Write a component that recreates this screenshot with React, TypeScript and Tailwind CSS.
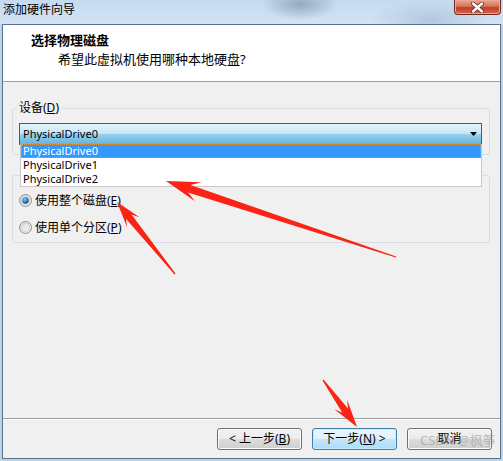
import React from 'react';

const ui = "font-['Noto_Sans','Noto_Sans_CJK_SC',sans-serif]";

function arrowPoints(
  tip: [number, number],
  tail: [number, number],
  head: number,
  wing: number,
  shaft: number
) {
  const [tx, ty] = tip;
  const [ax, ay] = tail;
  const dx = tx - ax;
  const dy = ty - ay;
  const len = Math.hypot(dx, dy);
  const ux = dx / len;
  const uy = dy / len;
  const nx = -uy;
  const ny = ux;
  const bx = tx - ux * head;
  const by = ty - uy * head;
  const sx = tx - ux * head * 0.72;
  const sy = ty - uy * head * 0.72;
  const pts = [
    [tx, ty],
    [bx + nx * wing, by + ny * wing],
    [sx + nx * shaft, sy + ny * shaft],
    [ax + nx * 0.6, ay + ny * 0.6],
    [ax - nx * 0.6, ay - ny * 0.6],
    [sx - nx * shaft, sy - ny * shaft],
    [bx - nx * wing, by - ny * wing],
  ];
  return pts.map((p) => p.map((v) => v.toFixed(1)).join(',')).join(' ');
}

function Radio({ checked }: { checked?: boolean }) {
  return (
    <svg width="13" height="13" viewBox="0 0 13 13" className="shrink-0">
      <defs>
        <linearGradient id={checked ? 'rg1' : 'rg0'} x1="0" y1="0" x2="1" y2="1">
          <stop offset="0" stopColor="#d9d9d9" />
          <stop offset="1" stopColor="#f7f7f7" />
        </linearGradient>
        <radialGradient id="dot" cx="0.4" cy="0.35" r="0.7">
          <stop offset="0" stopColor="#8ad5ff" />
          <stop offset="0.5" stopColor="#2a8ad4" />
          <stop offset="1" stopColor="#0d3f6b" />
        </radialGradient>
      </defs>
      <circle cx="6.5" cy="6.5" r="6" fill={`url(#${checked ? 'rg1' : 'rg0'})`} stroke="#8e8f8f" />
      <circle cx="6.5" cy="6.5" r="4.3" fill="none" stroke="#c9c9c9" strokeWidth="0.8" />
      {checked && <circle cx="6.5" cy="6.5" r="3.2" fill="url(#dot)" />}
    </svg>
  );
}

function Button({ children, focused }: { children: React.ReactNode; focused?: boolean }) {
  return (
    <div
      className={`w-[85px] h-[22px] rounded-[3px] border flex items-center justify-center text-[12px] leading-[14px] text-black ${
        focused
          ? 'border-[#3c7fb1] bg-[linear-gradient(to_bottom,#edf7fd_0%,#def1fc_50%,#c3e6fb_50%,#aedcf7_100%)] shadow-[inset_0_0_0_1px_#c3eafd]'
          : 'border-[#707070] bg-[linear-gradient(to_bottom,#f2f2f2_0%,#ebebeb_50%,#dddddd_50%,#cfcfcf_100%)] shadow-[inset_0_0_0_1px_#fbfbfb]'
      }`}
    >
      {children}
    </div>
  );
}

export default function App() {
  return (
    <div className={`relative w-[503px] h-[461px] overflow-hidden bg-[#bcd3ec] flex flex-col ${ui}`}>
      {/* title bar */}
      <div className="h-[24px] flex justify-between items-start bg-[radial-gradient(ellipse_38px_16px_at_300px_4px,#95a8bd,transparent),radial-gradient(ellipse_60px_20px_at_430px_20px,#b2c8df,transparent),linear-gradient(to_bottom,#c6daef,#d3e3f4)]">
        <div className="pl-[3px] pt-[3px] text-[12px] leading-[14px] text-black">添加硬件向导</div>
        <div className="mr-[2px] w-[47px] h-[15px] rounded-b-[4px] border border-t-0 border-[#6b2b22] bg-[linear-gradient(to_bottom,#e9a792_0%,#d6735b_45%,#c23d22_55%,#d9674a_100%)] flex items-center justify-center shadow-[inset_0_0_0_1px_#eca897]">
          <svg width="13" height="11" viewBox="0 0 13 11">
            <path d="M2 1.5 L11 9.5 M11 1.5 L2 9.5" stroke="#5a2a24" strokeWidth="4" strokeLinecap="round" />
            <path d="M2 1.5 L11 9.5 M11 1.5 L2 9.5" stroke="#ffffff" strokeWidth="2.4" strokeLinecap="round" />
          </svg>
        </div>
      </div>

      {/* client */}
      <div className="ml-[2px] w-[499px] h-[435px] border border-[#5d7288] bg-[#f0f0f0] flex flex-col">
        <div className="h-[57px] shrink-0 bg-white border-b border-[#a0a0a0] pt-[7px] pl-[28px]">
          <div className="text-[13px] leading-[16px] font-bold text-black">选择物理磁盘</div>
          <div className="mt-[3px] ml-[27px] text-[13px] leading-[16px] text-black">希望此虚拟机使用哪种本地硬盘?</div>
        </div>

        <div className="flex-1 flex flex-col">
          <fieldset className="mt-[19px] ml-[9px] w-[478px] border border-[#d5dfe5] rounded-[3px] pb-[9px]">
            <legend className="ml-[4px] px-[2px] text-[12px] leading-[14px] text-black">
              设备(<span className="underline">D</span>)
            </legend>
            <div className="relative mt-[8px] ml-[6px] w-[463px] h-[22px] border border-[#2c628b] bg-[linear-gradient(to_bottom,#e5f4fc_0%,#c4e5f6_50%,#98d1ef_50%,#68b3db_100%)] flex items-center justify-between pl-[3px] pr-[4px]">
              <span className="text-[11px] leading-[14px] text-black">PhysicalDrive0</span>
              <svg width="7" height="4" viewBox="0 0 7 4">
                <path d="M0 0 H7 L3.5 4 Z" fill="#000" />
              </svg>
              <div className="absolute z-10 top-full left-0 right-[-1px] bg-white border-x border-b border-[#c8c8c8] flex flex-col text-[11px] leading-[14px]">
                <div className="h-[14px] bg-[#3399ff] text-white pl-[2px] outline outline-1 outline-dotted outline-[#e3932f] -outline-offset-1">PhysicalDrive0</div>
                <div className="h-[14px] pl-[2px] text-black">PhysicalDrive1</div>
                <div className="h-[14px] pl-[2px] text-black">PhysicalDrive2</div>
              </div>
            </div>
          </fieldset>

          <div className="mt-[20px] ml-[9px] w-[478px] border border-[#d5dfe5] rounded-[3px] pt-[18px] pb-[8px] pl-[6px] flex flex-col gap-[14px]">
            <div className="h-[13px] flex items-center gap-[3px] text-[12px] leading-[14px] text-black">
              <Radio checked />
              <span>
                使用整个磁盘(<span className="underline">E</span>)
              </span>
            </div>
            <div className="h-[13px] flex items-center gap-[3px] text-[12px] leading-[14px] text-black">
              <Radio />
              <span>
                使用单个分区(<span className="underline">P</span>)
              </span>
            </div>
          </div>

          <div className="flex-1" />

          <div className="h-[2px] border-t border-[#a0a0a0] border-b border-b-white" />
          <div className="h-[38px] pt-[8px] pr-[8px] flex justify-end items-start gap-[10px]">
            <Button>
              &lt; 上一步(<span className="underline">B</span>)
            </Button>
            <Button focused>
              下一步(<span className="underline">N</span>) &gt;
            </Button>
            <Button>取消</Button>
          </div>
        </div>
      </div>

      {/* watermark */}
      <div className="absolute left-[420px] top-[432px] text-[13px] leading-[16px] text-[#9a9a9a] opacity-60 pointer-events-none">
        CSDN @枫筝
      </div>

      {/* annotation arrows */}
      <svg className="absolute inset-0 pointer-events-none z-20" width="503" height="461" viewBox="0 0 503 461">
        <polygon points={arrowPoints([166, 181], [396, 257], 34, 10, 4)} fill="#fa2314" />
        <polygon points={arrowPoints([117, 202], [175, 274], 26, 8, 3.5)} fill="#fa2314" />
        <polygon points={arrowPoints([357, 427], [323, 380], 28, 8, 3.5)} fill="#fa2314" />
      </svg>
    </div>
  );
}
